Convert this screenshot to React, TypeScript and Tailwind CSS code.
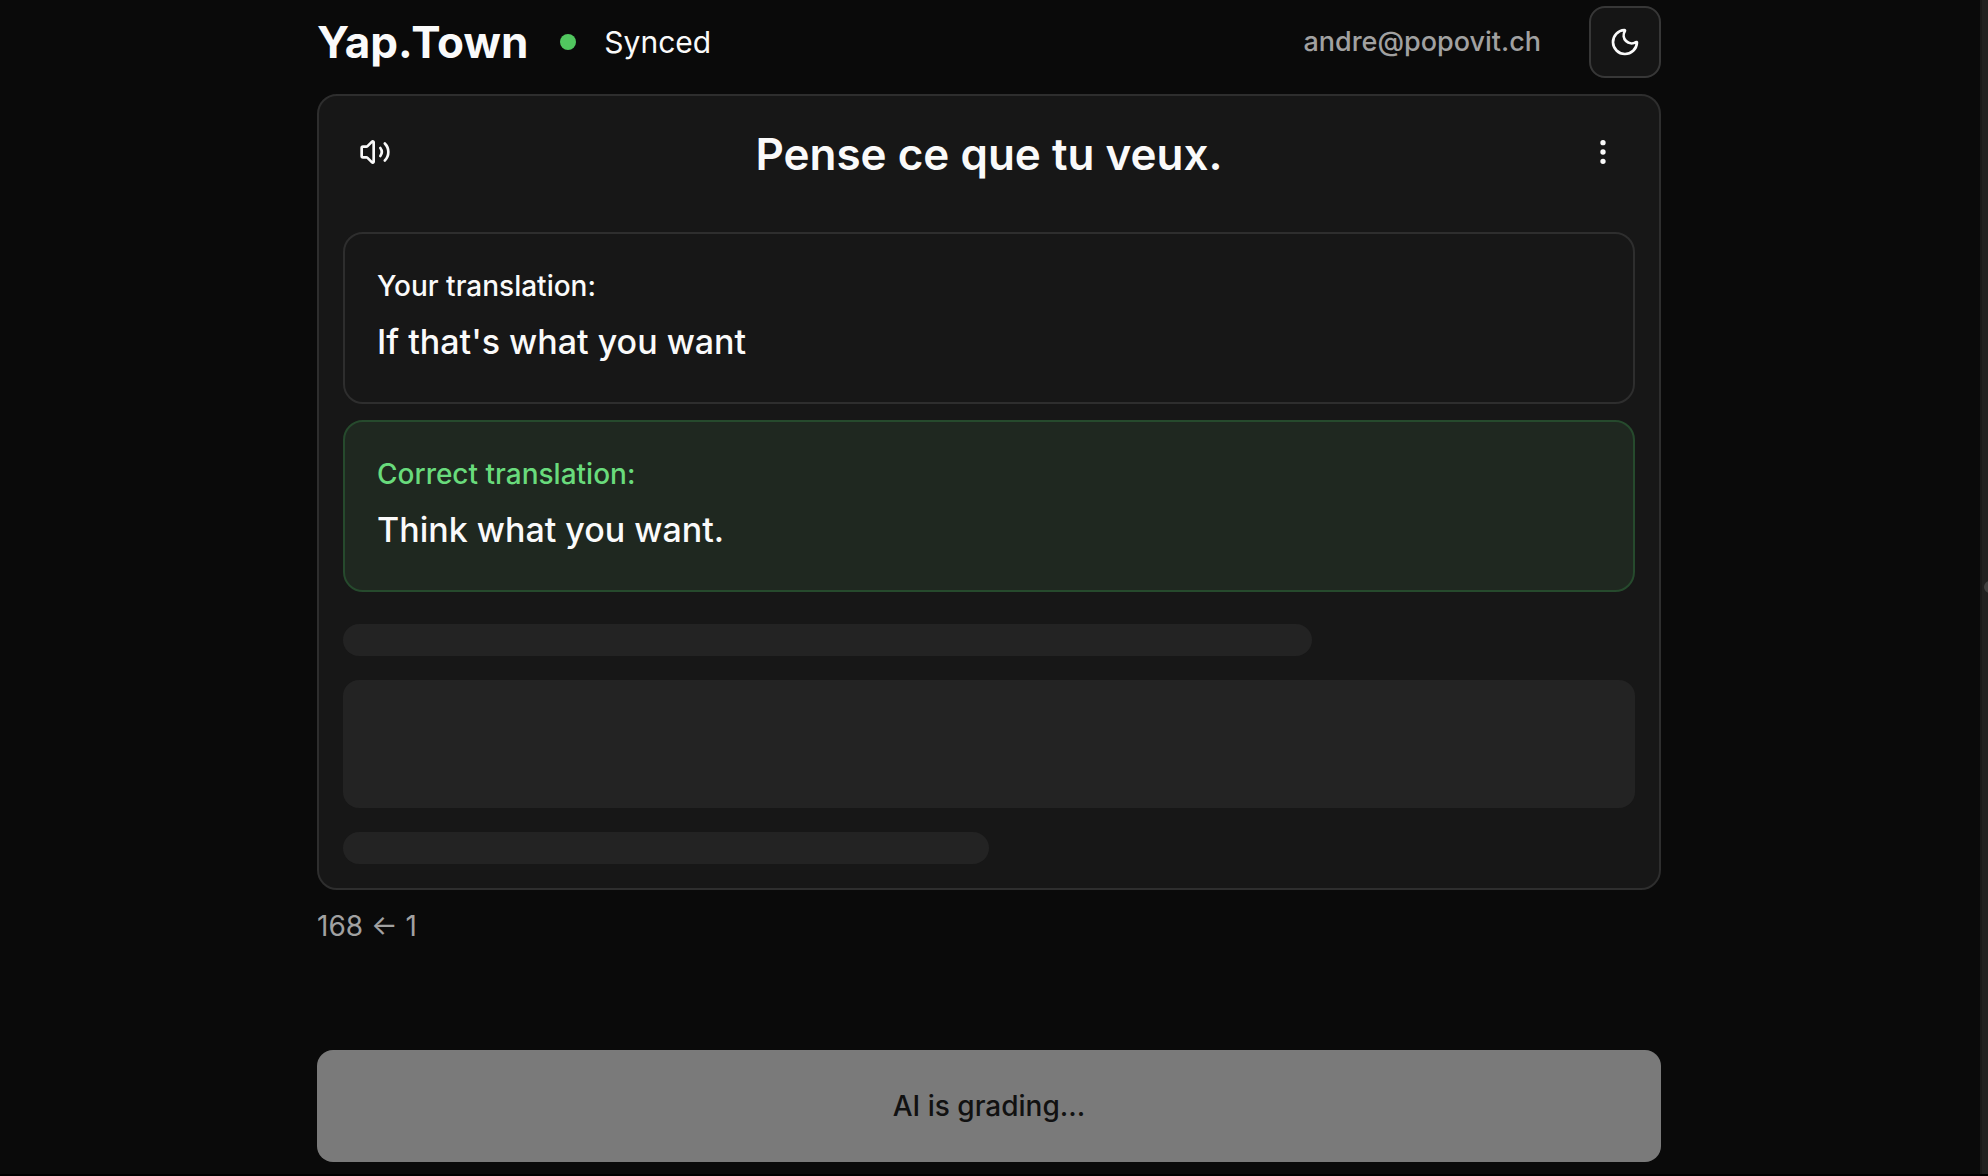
import { EllipsisVertical, Moon, Volume2 } from "lucide-react";

function Answer({ label, text, correct = false }: { label: string; text: string; correct?: boolean }) {
  return (
    <section
      className={
        correct
          ? "rounded-[20px] border-2 border-[#264a2d] bg-[#1f2820] px-8 py-8"
          : "rounded-[20px] border-2 border-[#2e2e2e] px-8 py-8"
      }
    >
      <h2 className={correct ? "text-[28px] leading-10 font-medium text-[#69db7c]" : "text-[28px] leading-10 font-medium"}>
        {label}
      </h2>
      <p className="mt-2 text-[34px] leading-[56px] font-medium">{text}</p>
    </section>
  );
}

export default function App() {
  return (
    <div className="flex min-h-screen border-b-2 border-black bg-[#0a0a0a] font-['Inter',sans-serif] text-[#fafafa]">
      <div className="flex min-w-0 flex-1 flex-col pr-0.5">
        <div className="mx-auto flex w-full max-w-[1344px] flex-1 flex-col pt-1.5 pb-3">
          <header className="flex items-center justify-between">
            <div className="flex items-center">
              <h1 className="text-[44px] leading-[72px] font-bold">Yap.Town</h1>
              <span className="ml-8 size-4 rounded-full bg-[#51c75f]" />
              <span className="ml-7 text-[30px] leading-12">Synced</span>
            </div>
            <div className="flex items-center gap-12">
              <span className="text-[27px] leading-10 font-medium text-[#a1a1a1]">andre@popovit.ch</span>
              <button
                type="button"
                aria-label="Toggle theme"
                className="flex size-[72px] items-center justify-center rounded-2xl border-2 border-[#373737] bg-[#151515]"
              >
                <Moon className="size-8" />
              </button>
            </div>
          </header>

          <main className="mt-4 rounded-[20px] border-2 border-[#2e2e2e] bg-[#171717] p-6">
            <div className="flex items-start justify-between pb-11">
              <button type="button" aria-label="Play audio" className="flex h-16 w-16 items-center justify-center">
                <Volume2 className="size-8" />
              </button>
              <h2 className="text-[44px] leading-[68px] font-semibold">Pense ce que tu veux.</h2>
              <button type="button" aria-label="More options" className="flex h-16 w-16 items-center justify-center">
                <EllipsisVertical className="size-8" />
              </button>
            </div>
            <div className="flex flex-col gap-4">
              <Answer label="Your translation:" text="If that's what you want" />
              <Answer label="Correct translation:" text="Think what you want." correct />
            </div>
            <div className="mt-8 flex flex-col gap-6">
              <div className="h-8 w-3/4 rounded-2xl bg-[#232323]" />
              <div className="h-32 rounded-2xl bg-[#232323]" />
              <div className="h-8 w-1/2 rounded-2xl bg-[#232323]" />
            </div>
          </main>

          <p className="mt-4 text-[28px] leading-10 text-[#a1a1a1]">168 ← 1</p>

          <button
            type="button"
            disabled
            className="mt-auto h-28 w-full rounded-2xl bg-[#7a7a7a] text-[28px] leading-10 font-medium text-[#111111]"
          >
            AI is grading...
          </button>
        </div>
      </div>
      <aside className="flex w-2 items-center overflow-hidden border-l-2 border-[#191919] bg-[#202020] pl-0.5">
        <div className="size-3 shrink-0 rounded-full bg-[#404040]" />
      </aside>
    </div>
  );
}
